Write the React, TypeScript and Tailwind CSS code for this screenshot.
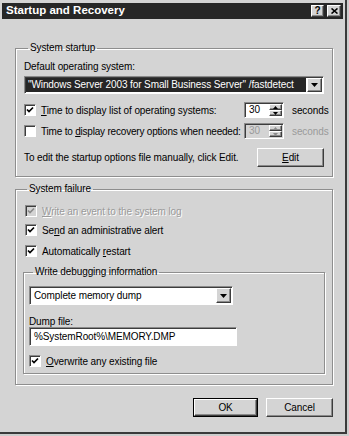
import React from "react";

// classic 3D bevels
const raised =
  "border border-t-white border-l-white border-r-[#3c3c3c] border-b-[#3c3c3c] shadow-[inset_-1px_-1px_0_#8a8a8a] bg-[#d4d4d4]";
const sunken =
  "border border-t-[#8a8a8a] border-l-[#8a8a8a] border-r-white border-b-white shadow-[inset_1px_1px_0_#3c3c3c]";
const etched =
  "border border-[#8e8e8e] shadow-[1px_1px_0_#fff,inset_1px_1px_0_#fff] rounded-none m-0";

const Check = ({ checked, disabled }: { checked?: boolean; disabled?: boolean }) => (
  <span
    className={`w-[12px] h-[12px] shrink-0 flex items-center justify-center ${sunken} ${
      disabled ? "bg-[#d4d4d4]" : "bg-white"
    }`}
  >
    {checked && (
      <svg width="8" height="8" viewBox="0 0 8 8">
        <path
          d="M1 3.5 L3 5.5 L7 1.5"
          fill="none"
          stroke={disabled ? "#8a8a8a" : "#000"}
          strokeWidth="1.7"
        />
      </svg>
    )}
  </span>
);

const DownArrow = () => (
  <svg width="7" height="4" viewBox="0 0 7 4">
    <path d="M0 0 H7 L3.5 4 Z" fill="#000" />
  </svg>
);

const ArrowButton = () => (
  <span className={`w-[15px] h-full flex items-center justify-center ${raised}`}>
    <DownArrow />
  </span>
);

const Spin = ({ disabled }: { disabled?: boolean }) => (
  <div className={`w-[40px] h-[16px] shrink-0 flex ${sunken} ${disabled ? "bg-[#d4d4d4]" : "bg-white"} p-[1px]`}>
    <span className={`flex-1 pl-[3px] leading-[12px] ${disabled ? "text-[#9a9a9a]" : "text-black"}`}>30</span>
    <div className="w-[13px] flex flex-col">
      <span className={`flex-1 flex items-center justify-center ${raised}`}>
        <svg width="5" height="3" viewBox="0 0 5 3">
          <path d="M0 3 H5 L2.5 0 Z" fill={disabled ? "#8a8a8a" : "#000"} />
        </svg>
      </span>
      <span className={`flex-1 flex items-center justify-center ${raised}`}>
        <svg width="5" height="3" viewBox="0 0 5 3">
          <path d="M0 0 H5 L2.5 3 Z" fill={disabled ? "#8a8a8a" : "#000"} />
        </svg>
      </span>
    </div>
  </div>
);

export default function App() {
  return (
    <div
      className="w-[349px] h-[436px] bg-[#cdcdcd] text-[10px] text-black tracking-[-0.1px]"
      style={{ fontFamily: '"Liberation Sans", Arial, sans-serif' }}
    >
      <div className="w-[347px] h-[434px] bg-[#d4d4d4] border-r-2 border-b-2 border-[#3a3a3a] flex flex-col">
        {/* Title bar */}
        <div className="mt-[3px] mx-[2px] h-[16px] bg-[#272727] flex items-center pl-[4px] pr-[2px]">
          <span className="text-white font-bold text-[11.5px] leading-none flex-1 tracking-normal">Startup and Recovery</span>
          <div className="flex gap-[3px]">
            <span className={`w-[13px] h-[12px] flex items-center justify-center font-bold text-[10px] leading-none ${raised}`}>?</span>
            <span className={`w-[14px] h-[12px] flex items-center justify-center ${raised}`}>
              <svg width="7" height="6" viewBox="0 0 7 6">
                <path d="M0.5 0.5 L6.5 5.5 M6.5 0.5 L0.5 5.5" stroke="#000" strokeWidth="1.6" />
              </svg>
            </span>
          </div>
        </div>

        <div className="flex flex-col pl-[15px] pr-[12px]">
          {/* System startup */}
          <fieldset className={`mt-[23px] px-[8px] pb-[9px] ${etched}`}>
            <legend className="ml-[4px] px-[2px] leading-[12px]">System startup</legend>
            <div className="mt-[7px] leading-[12px]">Default operating system:</div>
            <div className={`mt-[3px] h-[18px] flex bg-white p-[1px] ${sunken}`}>
              <span className="flex-1 bg-[#262626] text-white leading-[14px] pl-[2px] mr-[1px] whitespace-nowrap overflow-hidden">
                "Windows Server 2003 for Small Business Server" /fastdetect
              </span>
              <ArrowButton />
            </div>
            <div className="mt-[8px] h-[16px] flex items-center mr-[-5px]">
              <Check checked />
              <span className="ml-[5px] flex-1 whitespace-nowrap">
                <u>T</u>ime to display list of operating systems:
              </span>
              <Spin />
              <span className="ml-[8px] w-[37px] whitespace-nowrap">seconds</span>
            </div>
            <div className="mt-[5px] h-[16px] flex items-center mr-[-5px]">
              <Check />
              <span className="ml-[5px] flex-1 whitespace-nowrap tracking-[-0.2px]">
                Time to <u>d</u>isplay recovery options when needed:
              </span>
              <Spin disabled />
              <span className="ml-[8px] w-[37px] whitespace-nowrap text-[#9a9a9a]">seconds</span>
            </div>
            <div className="mt-[9px] h-[19px] flex items-center">
              <span className="flex-1 whitespace-nowrap">To edit the startup options file manually, click Edit.</span>
              <span className={`w-[67px] h-full flex items-center justify-center ${raised}`}>
                <u>E</u>dit
              </span>
            </div>
          </fieldset>

          {/* System failure */}
          <fieldset className={`mt-[6px] px-[7px] pb-[10px] ${etched}`}>
            <legend className="ml-[4px] px-[2px] leading-[12px]">System failure</legend>
            <div className="mt-[9px] h-[14px] flex items-center pl-[2px]">
              <Check checked disabled />
              <span className="ml-[5px] text-[#9a9a9a] [text-shadow:1px_1px_0_#fff]">
                <u>W</u>rite an event to the system log
              </span>
            </div>
            <div className="mt-[5px] h-[14px] flex items-center pl-[2px]">
              <Check checked />
              <span className="ml-[5px]">
                Se<u>n</u>d an administrative alert
              </span>
            </div>
            <div className="mt-[7px] h-[14px] flex items-center pl-[2px]">
              <Check checked />
              <span className="ml-[5px]">
                Automatically <u>r</u>estart
              </span>
            </div>

            <fieldset className={`mt-[8px] px-[5px] pb-[5px] ${etched}`}>
              <legend className="ml-[4px] px-[2px] leading-[12px]">Write debugging information</legend>
              <div className={`mt-[8px] w-[204px] h-[19px] flex bg-white p-[1px] ${sunken}`}>
                <span className="flex-1 leading-[15px] pl-[3px]">Complete memory dump</span>
                <ArrowButton />
              </div>
              <div className="mt-[11px] leading-[11px]">Dump file:</div>
              <div className={`w-[208px] h-[19px] bg-white flex items-center pl-[4px] ${sunken}`}>
                %SystemRoot%\MEMORY.DMP
              </div>
              <div className="mt-[8px] h-[14px] flex items-center">
                <Check checked />
                <span className="ml-[5px]">
                  <u>O</u>verwrite any existing file
                </span>
              </div>
            </fieldset>
          </fieldset>

          {/* Buttons */}
          <div className="mt-[13px] flex justify-end gap-[8px]">
            <span className="w-[65px] h-[19px] border border-black flex">
              <span className={`flex-1 flex items-center justify-center ${raised}`}>OK</span>
            </span>
            <span className={`w-[67px] h-[19px] flex items-center justify-center ${raised}`}>Cancel</span>
          </div>
        </div>
      </div>
    </div>
  );
}
